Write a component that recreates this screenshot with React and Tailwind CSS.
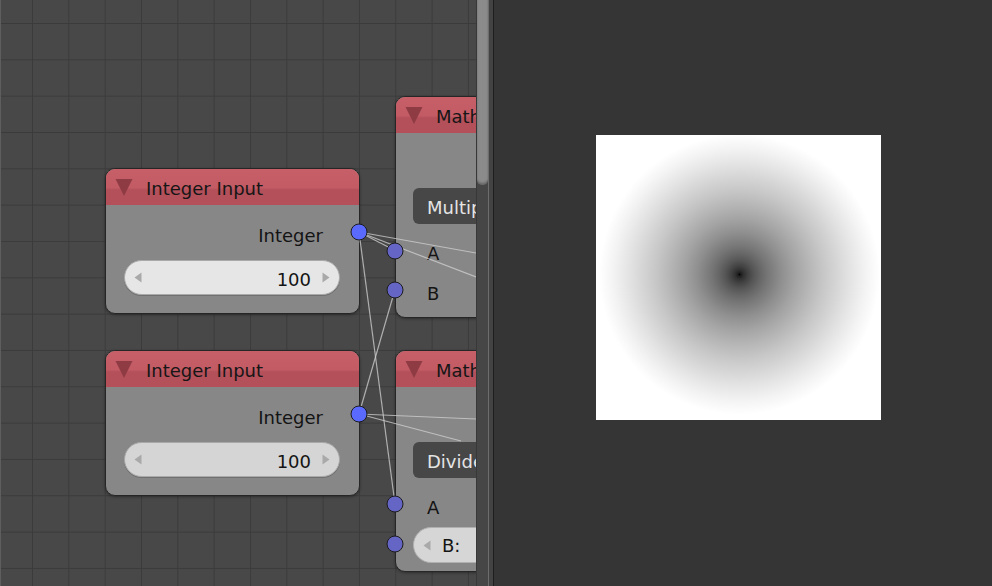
import React from "react";

const Tri = () => (
  <svg width="18" height="18" viewBox="0 0 18 18" className="shrink-0">
    <polygon points="0.5,1 17.5,1 9,18" fill="#8f3b43" />
  </svg>
);

const ArrowL = () => (
  <svg width="8" height="11" viewBox="0 0 8 11" className="shrink-0">
    <polygon points="7.5,0.5 7.5,10.5 0.5,5.5" fill="#a9a9a9" />
  </svg>
);

const ArrowR = () => (
  <svg width="8" height="11" viewBox="0 0 8 11" className="shrink-0">
    <polygon points="0.5,0.5 0.5,10.5 7.5,5.5" fill="#a9a9a9" />
  </svg>
);

function Header({ title }) {
  return (
    <div className="flex h-[36px] items-center gap-[13px] rounded-t-[9px] bg-[linear-gradient(to_bottom,#c75f68_0%,#c35b64_52%,#b3505a_58%,#b3505a_100%)] pl-[9px]">
      <Tri />
      <span className="translate-y-[2px] whitespace-nowrap text-[#161616]">{title}</span>
    </div>
  );
}

function IntegerNode({ top, sliderBg }) {
  return (
    <div
      className={
        "absolute left-[105px] flex h-[146px] w-[255px] flex-col rounded-[10px] border border-[#262626] bg-[#878787] shadow-[0_1px_3px_rgba(0,0,0,0.35)] " +
        top
      }
    >
      <Header title="Integer Input" />
      <div className="mt-[15px] flex h-[28px] items-center justify-end pr-[36px] text-[#141414]">
        <span className="translate-y-[2px]">Integer</span>
      </div>
      <div
        className={
          "mt-[12px] ml-[18px] mr-[19px] flex h-[35px] items-center rounded-full border border-[#a9a9a9] pl-[9px] pr-[9px] shadow-[0_1px_0_#707070] " +
          sliderBg
        }
      >
        <ArrowL />
        <span className="flex-1 translate-y-[2px] pr-[11px] text-right text-[#141414]">100</span>
        <ArrowR />
      </div>
    </div>
  );
}

function MathNode({ top, op, second }) {
  return (
    <div
      className={
        "absolute left-[395px] flex h-[222px] w-[220px] flex-col rounded-[10px] border border-[#262626] bg-[#878787] shadow-[0_1px_3px_rgba(0,0,0,0.35)] " +
        top
      }
    >
      <Header title="Math" />
      <div className="mt-[55px] ml-[17px] flex h-[36px] items-center rounded-[6px] bg-[#474747] pl-[14px] text-[#e4e4e4]">
        <span className="translate-y-[2px]">{op}</span>
      </div>
      {second ? (
        <>
          <div className="mt-[9px] flex h-[40px] items-center pl-[31px] pt-[2px] text-[#141414]">A</div>
          <div className="ml-[17px] flex h-[36px] items-center rounded-l-full border border-[#b0b0b0] bg-[#d6d6d6] pl-[9px] text-[#141414]">
            <ArrowL />
            <span className="ml-[11px] translate-y-[1px]">B:</span>
          </div>
        </>
      ) : (
        <>
          <div className="mt-[10px] flex h-[40px] items-center pl-[31px] text-[#141414]">A</div>
          <div className="flex h-[40px] items-center pl-[31px] text-[#141414]">B</div>
        </>
      )}
    </div>
  );
}

function Socket({ x, y, out }) {
  return (
    <div
      className={
        "absolute h-[17px] w-[17px] -translate-x-1/2 -translate-y-1/2 rounded-full border border-[#1c1c1c] " +
        (out ? "bg-[#5a6aff]" : "bg-[#6565c6]")
      }
      style={{ left: x, top: y }}
    />
  );
}

function Links() {
  const lines = [
    [359, 232, 395, 250.5],
    [359, 232, 476, 253],
    [359, 232, 476, 277],
    [359, 232, 395, 504],
    [359, 414, 395, 289.5],
    [359, 414, 476, 419],
    [359, 414, 461, 441],
  ];
  return (
    <svg className="pointer-events-none absolute left-0 top-0" width="476" height="586">
      {lines.map(([a, b, c, d], i) => (
        <line key={i} x1={a} y1={b} x2={c} y2={d} stroke="#d2d2d2" strokeOpacity="0.75" strokeWidth="1.2" />
      ))}
    </svg>
  );
}

function Gradient() {
  const stops = [
    [0, 0], [0.01, 28], [0.03, 48], [0.06, 66], [0.1, 85], [0.15, 103], [0.2, 118],
    [0.3, 143], [0.4, 164], [0.5, 182], [0.6, 199], [0.7, 214], [0.8, 229], [0.9, 243], [1, 255],
  ];
  return (
    <svg width="285" height="285" viewBox="0 0 285 285" className="block">
      <defs>
        <radialGradient id="rg" gradientUnits="userSpaceOnUse" cx="143.5" cy="139.5" r="140">
          {stops.map(([o, v], i) => (
            <stop key={i} offset={o} stopColor={`rgb(${v},${v},${v})`} />
          ))}
        </radialGradient>
      </defs>
      <rect width="285" height="285" fill="url(#rg)" />
    </svg>
  );
}

export default function App() {
  return (
    <div className="flex h-[586px] w-[992px] overflow-hidden bg-[#353535] font-['DejaVu_Sans',sans-serif] text-[18px] leading-none">
      <div className="relative h-full w-[476px] shrink-0 overflow-hidden bg-[#484848] bg-[linear-gradient(to_right,#3b3b3b_1px,transparent_1px),linear-gradient(to_bottom,#3b3b3b_1px,transparent_1px)] bg-size-[36.33px_36.33px] bg-position-[32px_23px] shadow-[inset_1px_0_0_#5e5e5e]">
        <IntegerNode top="top-[168px]" sliderBg="bg-[#e6e6e6]" />
        <IntegerNode top="top-[350px]" sliderBg="bg-[#d5d5d5]" />
        <MathNode top="top-[96px]" op="Multiply" />
        <MathNode top="top-[350px]" op="Divide" second />
        <Links />
        <Socket x={359} y={232} out />
        <Socket x={359} y={414} out />
        <Socket x={395} y={250.5} />
        <Socket x={395} y={289.5} />
        <Socket x={395} y={504} />
        <Socket x={395} y={544} />
      </div>
      <div className="w-px shrink-0 bg-[#383838]" />
      <div className="flex w-[11px] shrink-0 flex-col bg-[#464646]">
        <div className="h-[185px] rounded-b-[5px] bg-[#8b8b8b] shadow-[inset_0_-2px_2px_rgba(0,0,0,0.25)]" />
      </div>
      <div className="w-px shrink-0 bg-[#6d6d6d]" />
      <div className="w-[4px] shrink-0 bg-[#434343]" />
      <div className="w-px shrink-0 bg-[#1e1e1e]" />
      <div className="flex-1 bg-[#353535] pl-[102px] pt-[135px]">
        <Gradient />
      </div>
    </div>
  );
}
